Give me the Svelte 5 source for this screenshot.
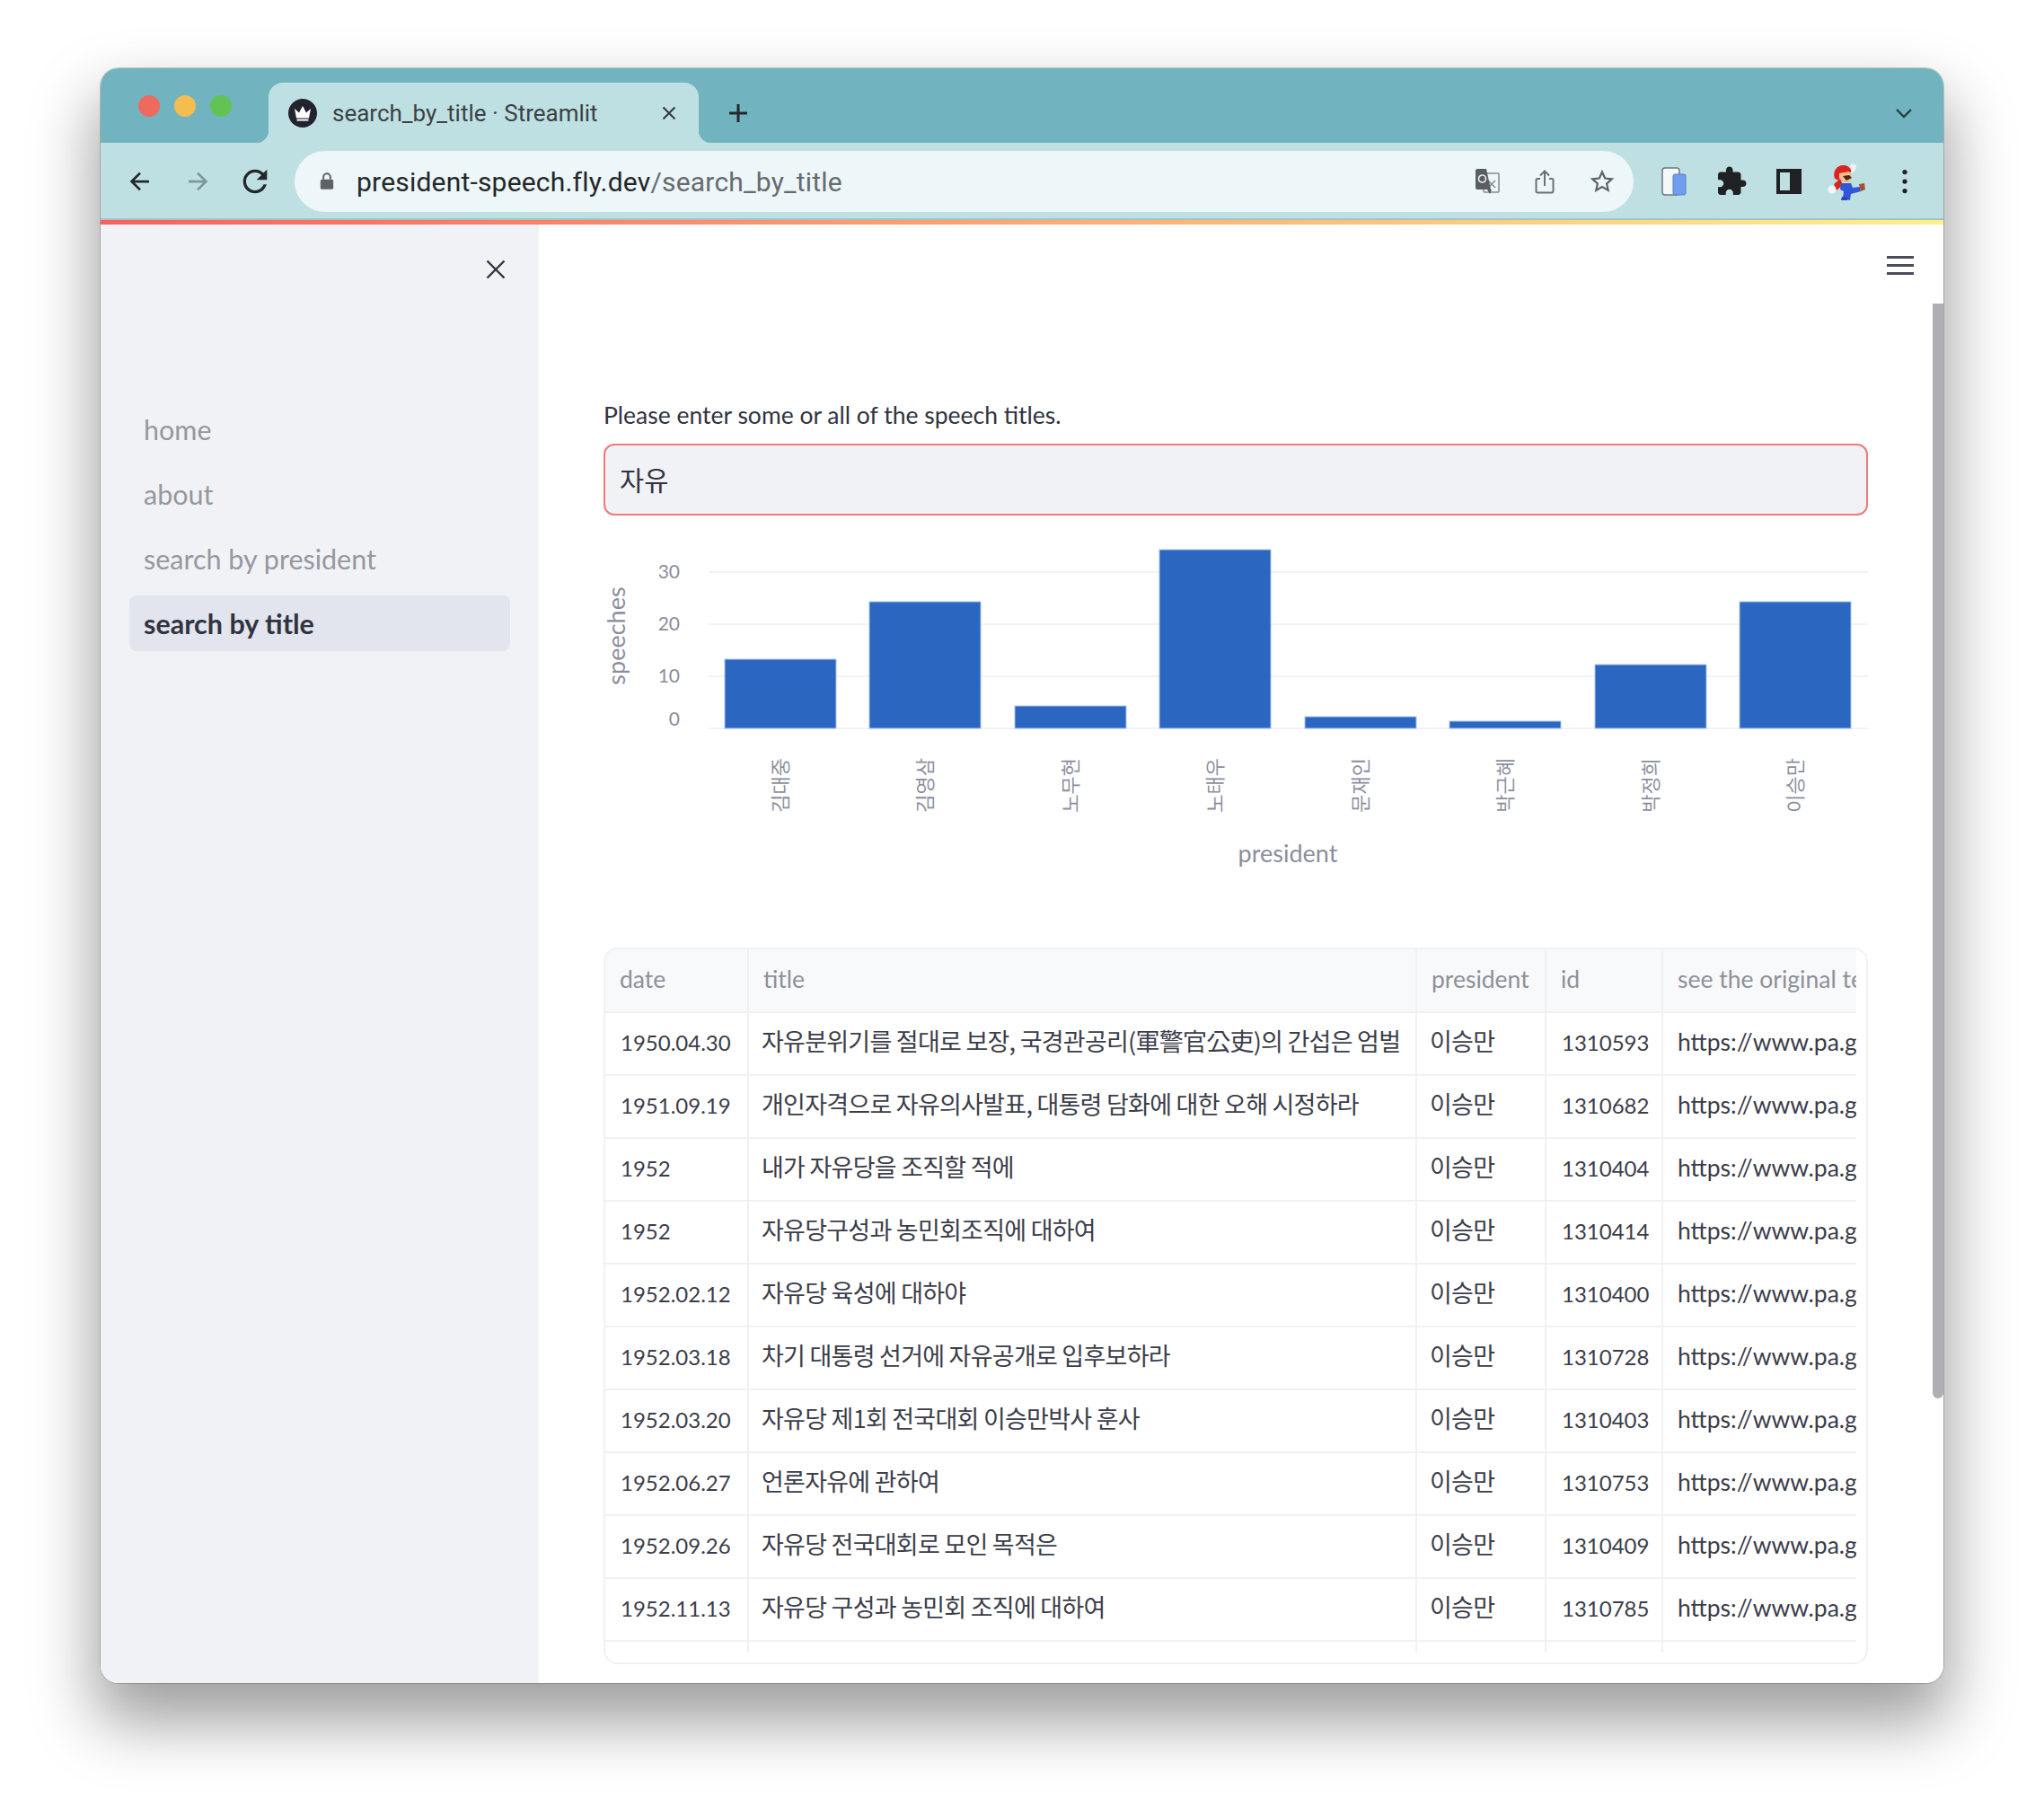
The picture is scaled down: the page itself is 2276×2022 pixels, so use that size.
<script lang="ts">
  const navItems = [
    { label: "home", active: false },
    { label: "about", active: false },
    { label: "search by president", active: false },
    { label: "search by title", active: true }
  ];

  // x is the bar's left edge in the chart's own coordinates, top is where the bar starts
  const bars = [
    { name: "김대중", x: 135, top: 141 },
    { name: "김영삼", x: 296, top: 77 },
    { name: "노무현", x: 458, top: 193 },
    { name: "노태우", x: 619, top: 19 },
    { name: "문재인", x: 781, top: 205 },
    { name: "박근혜", x: 942, top: 210 },
    { name: "박정희", x: 1104, top: 147 },
    { name: "이승만", x: 1265, top: 77 }
  ];
  const ticks = [
    { label: "30", y: 44, labelY: 42 },
    { label: "20", y: 102, labelY: 100 },
    { label: "10", y: 160, labelY: 158 },
    { label: "0", y: 218, labelY: 206 }
  ];

  const url = "https://www.pa.go.kr/research/contents/speech/index.jsp";
  const rows = [
    ["1950.04.30", "자유분위기를 절대로 보장, 국경관공리(軍警官公吏)의 간섭은 엄벌", "1310593"],
    ["1951.09.19", "개인자격으로 자유의사발표, 대통령 담화에 대한 오해 시정하라", "1310682"],
    ["1952", "내가 자유당을 조직할 적에", "1310404"],
    ["1952", "자유당구성과 농민회조직에 대하여", "1310414"],
    ["1952.02.12", "자유당 육성에 대하야", "1310400"],
    ["1952.03.18", "차기 대통령 선거에 자유공개로 입후보하라", "1310728"],
    ["1952.03.20", "자유당 제1회 전국대회 이승만박사 훈사", "1310403"],
    ["1952.06.27", "언론자유에 관하여", "1310753"],
    ["1952.09.26", "자유당 전국대회로 모인 목적은", "1310409"],
    ["1952.11.13", "자유당 구성과 농민회 조직에 대하여", "1310785"],
    ["", "", ""]
  ];
</script>

<div class="stage">
  <div class="window">
    <div class="tabstrip">
      <div class="lights">
        <span class="light red"></span>
        <span class="light yellow"></span>
        <span class="light green"></span>
      </div>
      <div class="tab">
        <svg class="favicon" viewBox="0 0 32 32">
          <circle cx="16" cy="16" r="16" fill="#23232f" />
          <path d="M7 11l5 4.500L16 8l4 7.500 5-4.500-2 10.500H9z" fill="#fff" />
          <rect x="9.600" y="22.600" width="12.800" height="2" fill="#fff" />
        </svg>
        <span class="tab-title">search_by_title · Streamlit</span>
        <svg class="tab-close" viewBox="0 0 16 16">
          <path d="M1.500 1.500l13 13M14.500 1.500l-13 13" stroke="#33383c" stroke-width="2" fill="none" />
        </svg>
      </div>
      <svg class="new-tab" viewBox="0 0 24 24">
        <path d="M12 2v20M2 12h20" stroke="#24282b" stroke-width="3" fill="none" />
      </svg>
      <svg class="tab-menu" viewBox="0 0 20 12">
        <path d="M2 2l8 8 8-8" stroke="#2c3a40" stroke-width="2.400" fill="none" />
      </svg>
    </div>

    <div class="toolbar">
      <svg class="tool" viewBox="0 0 24 24">
        <path d="M20 12H5M12 4.500L4.500 12l7.500 7.500" stroke="#23282b" stroke-width="2.200" fill="none" />
      </svg>
      <svg class="tool" viewBox="0 0 24 24">
        <path d="M4 12h15M12 4.500l7.500 7.500-7.500 7.500" stroke="#7f9699" stroke-width="2.200" fill="none" />
      </svg>
      <svg class="tool" viewBox="3 3 18 18">
        <path fill="#23282b" d="M17.650 6.350C16.200 4.900 14.210 4 12 4c-4.420 0-7.990 3.580-7.990 8s3.570 8 7.990 8c3.730 0 6.840-2.550 7.730-6h-2.080c-.82 2.330-3.040 4-5.650 4-3.310 0-6-2.690-6-6s2.690-6 6-6c1.660 0 3.140.69 4.220 1.780L13 11h7V4l-2.350 2.350z" />
      </svg>
      <div class="omnibox">
        <svg class="lock" viewBox="0 0 16 20">
          <path d="M4.500 8V5.500a3.500 3.500 0 0 1 7 0V8" stroke="#5f6368" stroke-width="1.800" fill="none" />
          <rect x="1.500" y="8" width="13" height="10" rx="1.500" fill="#5f6368" />
        </svg>
        <span class="url"><span class="host">president-speech.fly.dev</span>/search_by_title</span>
        <svg class="omni-icon translate" viewBox="0 0 28 28">
          <rect x="10" y="5" width="17" height="21" rx="1" fill="none" stroke="#85898d" stroke-width="1.500" />
          <path d="M15 13l8 8M23 13l-8 8" stroke="#85898d" stroke-width="1.500" />
          <path d="M1 2a2 2 0 0 1 2-2h10l5 23H3a2 2 0 0 1-2-2z" fill="#5a5e62" />
          <path d="M14 23l3 5 2-5z" fill="#5a5e62" />
          <circle cx="8.500" cy="11" r="4" fill="none" stroke="#e6eaec" stroke-width="1.700" />
        </svg>
        <svg class="omni-icon" viewBox="0 0 28 28">
          <path d="M9 11H6a1.500 1.500 0 0 0-1.500 1.500V25A1.500 1.500 0 0 0 6 26.500h16a1.500 1.500 0 0 0 1.500-1.500V12.500A1.500 1.500 0 0 0 22 11h-3" stroke="#6d7175" stroke-width="2" fill="none" />
          <path d="M14 19V3M9 7.500L14 2.500l5 5" stroke="#6d7175" stroke-width="2" fill="none" />
        </svg>
        <svg class="omni-icon" viewBox="0 0 28 28">
          <path d="M14 3.500l3.200 7 7.600.8-5.700 5.100 1.600 7.500L14 20.100l-6.700 3.800 1.600-7.500-5.700-5.100 7.600-.8z" stroke="#5f6368" stroke-width="2.200" fill="none" />
        </svg>
      </div>
      <svg class="ext phone" viewBox="0 0 28 32">
        <rect x="1" y="1" width="19" height="30" rx="3" fill="#f5f8fa" stroke="#6e7780" stroke-width="1.500" />
        <rect x="13" y="8" width="14" height="23" rx="2" fill="#6f9df0" stroke="#5c7fb8" stroke-width="1" />
      </svg>
      <svg class="ext puzzle" viewBox="0 0 24 24">
        <path fill="#202124" d="M20.500 11H19V7c0-1.100-.9-2-2-2h-4V3.500C13 2.120 11.880 1 10.500 1S8 2.120 8 3.500V5H4c-1.100 0-1.990.9-1.990 2v3.800H3.500c1.490 0 2.700 1.210 2.700 2.700s-1.210 2.700-2.700 2.700H2V20c0 1.100.9 2 2 2h3.800v-1.500c0-1.490 1.210-2.700 2.700-2.700 1.490 0 2.700 1.210 2.700 2.700V22H17c1.100 0 2-.9 2-2v-4h1.500c1.380 0 2.500-1.120 2.500-2.500S21.880 11 20.500 11z" />
      </svg>
      <svg class="ext panel" viewBox="0 0 28 28">
        <rect x="0" y="0" width="28" height="28" fill="#202124" />
        <rect x="4" y="4" width="11" height="20" fill="#bfe0e2" />
      </svg>
      <svg class="ext mario" viewBox="0 0 42 42">
        <path d="M23 7l4-6 5 2-1 6-5 3z" fill="#eef2f4" />
        <path d="M8 18C5 9 11 2 19 3c5 1 8 4 7 8l-10 3-3 6z" fill="#d9261c" />
        <path d="M13 12l11-2 3 6-2 6h-8l-4-4z" fill="#f3bd8e" />
        <path d="M17 15l7-1 3 3-6 3z" fill="#4a2a18" />
        <path d="M7 24l7-6 3 7-7 6z" fill="#d9261c" />
        <circle cx="5" cy="30" r="4.500" fill="#f4f6f8" />
        <path d="M15 23h11l2 5 8-1 1 5-11 3-1 7-8-2 1-8-4-2z" fill="#2f57d8" />
        <path d="M35 24l6-1 1 7-5 2z" fill="#a5552b" />
        <path d="M16 38l7 1-1 3h-7z" fill="#2a48b8" />
      </svg>
      <svg class="ext dots" viewBox="0 0 8 32">
        <circle cx="4" cy="4" r="3" fill="#202124" />
        <circle cx="4" cy="16" r="3" fill="#202124" />
        <circle cx="4" cy="28" r="3" fill="#202124" />
      </svg>
    </div>

    <div class="decoration"></div>

    <div class="app">
      <aside class="sidebar">
        <div class="sidebar-head">
          <svg class="close" viewBox="0 0 22 22">
            <path d="M1.500 1.500l19 19M20.500 1.500l-19 19" stroke="#31333f" stroke-width="2.400" fill="none" />
          </svg>
        </div>
        <nav class="nav">
          {#each navItems as item}
            <div class="nav-item" class:active={item.active}>{item.label}</div>
          {/each}
        </nav>
      </aside>

      <main class="main">
        <div class="burger"><span></span><span></span><span></span></div>
        <div class="scrollbar"></div>

        <label class="field-label" for="title-search">Please enter some or all of the speech titles.</label>
        <input id="title-search" class="field" type="text" value="자유" />

        <svg class="chart" width="1407" height="420" viewBox="0 0 1407 420">
          {#each ticks as t}
            <line x1="117" x2="1408" y1={t.y} y2={t.y} class="grid" />
            <text x="85" y={t.labelY} class="tick">{t.label}</text>
          {/each}
          {#each bars as b}
            <rect x={b.x} y={b.top} width="124" height={218 - b.top} class="bar" />
            <text transform="translate({b.x + 60}, 251) rotate(-90)" class="name">{b.name}</text>
          {/each}
          <text transform="translate(13, 115) rotate(-90)" class="axis">speeches</text>
          <text x="762" y="356" class="axis">president</text>
        </svg>

        <div class="frame">
          <div class="clip">
            <table>
              <colgroup>
                <col class="c-date" />
                <col class="c-title" />
                <col class="c-president" />
                <col class="c-id" />
                <col class="c-url" />
              </colgroup>
              <thead>
                <tr>
                  <th>date</th>
                  <th>title</th>
                  <th>president</th>
                  <th>id</th>
                  <th>see the original text</th>
                </tr>
              </thead>
              <tbody>
                {#each rows as r}
                  <tr>
                    <td class="num">{r[0]}</td>
                    <td class="ko">{r[1]}</td>
                    <td class="ko">{r[0] ? "이승만" : ""}</td>
                    <td class="num">{r[2]}</td>
                    <td class="link">{r[0] ? url : ""}</td>
                  </tr>
                {/each}
              </tbody>
            </table>
          </div>
        </div>
      </main>
    </div>
  </div>
</div>

<style>
  :global(body) {
    margin: 0;
    background: #fff;
    overflow: hidden;
  }

  .stage {
    box-sizing: border-box;
    width: 2276px;
    height: 2022px;
    padding: 76px 112px 148px;
    font-family: Lato, "Noto Sans CJK KR", sans-serif;
    color: #31333f;
  }

  .window {
    height: 100%;
    display: flex;
    flex-direction: column;
    border-radius: 20px;
    overflow: hidden;
    box-shadow:
      0 0 0 1px rgba(0, 0, 0, 0.18),
      0 38px 70px 6px rgba(0, 0, 0, 0.38);
  }

  /* browser chrome */
  .tabstrip {
    flex: 0 0 83px;
    display: flex;
    align-items: flex-end;
    background: #71b4bf;
    position: relative;
  }

  .lights {
    display: flex;
    gap: 16px;
    align-self: flex-start;
    margin: 30px 0 0 42px;
    width: 145px;
  }

  .light {
    width: 24px;
    height: 24px;
    border-radius: 50%;
  }
  .red {
    background: #ee6a5f;
  }
  .yellow {
    background: #f5bd4f;
  }
  .green {
    background: #61c354;
  }

  .tab {
    box-sizing: border-box;
    width: 479px;
    height: 67px;
    display: flex;
    align-items: center;
    padding: 0 25px 0 22px;
    background: #bfe0e2;
    border-radius: 16px 16px 0 0;
    position: relative;
  }

  .tab::before,
  .tab::after {
    content: "";
    position: absolute;
    bottom: 0;
    width: 14px;
    height: 14px;
  }
  .tab::before {
    left: -14px;
    background: radial-gradient(circle at 0 0, #71b4bf 14px, #bfe0e2 14.500px);
  }
  .tab::after {
    right: -14px;
    background: radial-gradient(circle at 100% 0, #71b4bf 14px, #bfe0e2 14.500px);
  }

  .favicon {
    width: 32px;
    height: 32px;
    flex: none;
  }

  .tab-title {
    margin-left: 17px;
    flex: 1;
    font-family: Roboto, sans-serif;
    font-size: 26px;
    color: #3a4245;
    white-space: nowrap;
  }

  .tab-close {
    width: 16px;
    height: 16px;
    flex: none;
  }

  .new-tab {
    width: 24px;
    height: 24px;
    margin: 0 0 21px 32px;
  }

  .tab-menu {
    position: absolute;
    right: 34px;
    top: 44px;
    width: 20px;
    height: 12px;
  }

  .toolbar {
    flex: 0 0 86px;
    box-sizing: border-box;
    display: flex;
    align-items: center;
    background: #bfe0e2;
    border-bottom: 2px solid #a3c5c9;
    padding: 2px 0 0 29px;
  }

  .tool {
    width: 30px;
    height: 30px;
    margin-right: 34px;
    flex: none;
  }

  .omnibox {
    box-sizing: border-box;
    width: 1491px;
    height: 68px;
    margin-left: -5px;
    border-radius: 34px;
    background: #edf6f8;
    display: flex;
    align-items: center;
    padding: 0 21px 0 27px;
    flex: none;
  }

  .lock {
    width: 18px;
    height: 22px;
    flex: none;
  }

  .url {
    margin-left: 24px;
    flex: 1;
    font-family: Roboto, sans-serif;
    font-size: 30px;
    letter-spacing: 0.2px;
    color: #666b70;
    white-space: nowrap;
  }

  .host {
    color: #23272a;
  }

  .omni-icon {
    width: 28px;
    height: 28px;
    margin-left: 36px;
    flex: none;
  }

  .ext {
    flex: none;
  }
  .phone {
    width: 28px;
    height: 32px;
    margin-left: 31px;
  }
  .puzzle {
    width: 36px;
    height: 36px;
    margin-left: 32px;
  }
  .panel {
    width: 28px;
    height: 28px;
    margin-left: 32px;
  }
  .mario {
    width: 42px;
    height: 42px;
    margin-left: 29px;
  }
  .dots {
    width: 8px;
    height: 28px;
    margin-left: 40px;
  }

  .decoration {
    flex: 0 0 5px;
    background: linear-gradient(90deg, #f8605c, #fdf08c);
  }

  /* app */
  .app {
    flex: 1;
    min-height: 0;
    display: flex;
    background: #fff;
  }

  .sidebar {
    flex: 0 0 488px;
    background: #f0f2f6;
  }

  .sidebar-head {
    display: flex;
    justify-content: flex-end;
    padding: 39px 37px 0 0;
    height: 159px;
    box-sizing: border-box;
  }

  .close {
    width: 22px;
    height: 22px;
  }

  .nav {
    display: flex;
    flex-direction: column;
    gap: 10px;
    margin: 0 32px;
    padding-top: 38px;
  }

  .nav-item {
    height: 62px;
    line-height: 62px;
    padding-left: 16px;
    border-radius: 8px;
    font-size: 30.500px;
    color: #96979f;
  }

  .nav-item.active {
    background: #e2e5ee;
    color: #31333f;
    font-weight: 700;
  }

  .main {
    flex: 1;
    min-width: 0;
    position: relative;
    overflow: hidden;
    padding: 195px 84px 0 72px;
  }

  .burger {
    position: absolute;
    top: 35px;
    right: 33px;
    width: 30px;
    display: flex;
    flex-direction: column;
    gap: 6px;
  }
  .burger span {
    height: 3px;
    background: #4b4d5c;
  }

  .scrollbar {
    position: absolute;
    right: 0;
    top: 88px;
    width: 12px;
    height: 1219px;
    border-radius: 0 0 6px 6px;
    background: #aeaeb4;
  }

  .field-label {
    display: block;
    font-size: 26.500px;
    line-height: 34px;
    margin-bottom: 15px;
    color: #31333f;
  }

  .field {
    display: block;
    box-sizing: border-box;
    width: 100%;
    height: 80px;
    padding: 0 16px 3px;
    border: 2px solid #f07a7a;
    border-radius: 12px;
    background: #f0f2f6;
    font-family: "Noto Sans CJK KR", sans-serif;
    font-size: 29.500px;
    color: #31333f;
    outline: none;
  }

  .chart {
    display: block;
    margin-top: 19px;
    overflow: visible;
  }

  .grid {
    stroke: #f0f2f6;
    stroke-width: 2;
  }

  .bar {
    fill: #2b66c1;
    stroke: #a9c4ea;
    stroke-width: 1;
  }

  .tick {
    font-size: 21px;
    fill: #8b8e9c;
    text-anchor: end;
    dominant-baseline: central;
  }

  .name {
    font-family: "Noto Sans CJK KR", sans-serif;
    font-size: 22px;
    fill: #8b8e9c;
    text-anchor: end;
    dominant-baseline: central;
  }

  .axis {
    font-size: 27px;
    fill: #8b8e9c;
    text-anchor: middle;
    dominant-baseline: central;
  }

  .frame {
    box-sizing: border-box;
    margin-top: 42px;
    height: 798px;
    border: 2px solid #f0f1f3;
    border-radius: 16px;
    padding: 0 11px 11px 0;
  }

  .clip {
    height: 783px;
    overflow: hidden;
    border-radius: 14px 0 0 0;
  }

  table {
    table-layout: fixed;
    width: 1600px;
    border-collapse: collapse;
  }

  .c-date {
    width: 159px;
  }
  .c-title {
    width: 744px;
  }
  .c-president {
    width: 144px;
  }
  .c-id {
    width: 130px;
  }

  th,
  td {
    box-sizing: border-box;
    height: 70px;
    padding: 0 14px 4px 17px;
    white-space: nowrap;
    overflow: hidden;
    border-right: 2px solid #f0f1f3;
    border-bottom: 2px solid #f0f1f3;
    text-align: left;
    font-size: 24px;
    font-weight: 400;
    color: #3b3d49;
  }

  th {
    height: 70px;
    background: #f8f9fb;
    color: #8e9099;
    font-size: 26.500px;
    padding-left: 16px;
  }

  td.ko {
    font-family: "Noto Sans CJK KR", sans-serif;
    font-size: 27px;
    letter-spacing: -0.75px;
    padding-left: 14px;
    padding-bottom: 8px;
  }

  td.link {
    font-size: 26.500px;
    padding-left: 16px;
  }
</style>
